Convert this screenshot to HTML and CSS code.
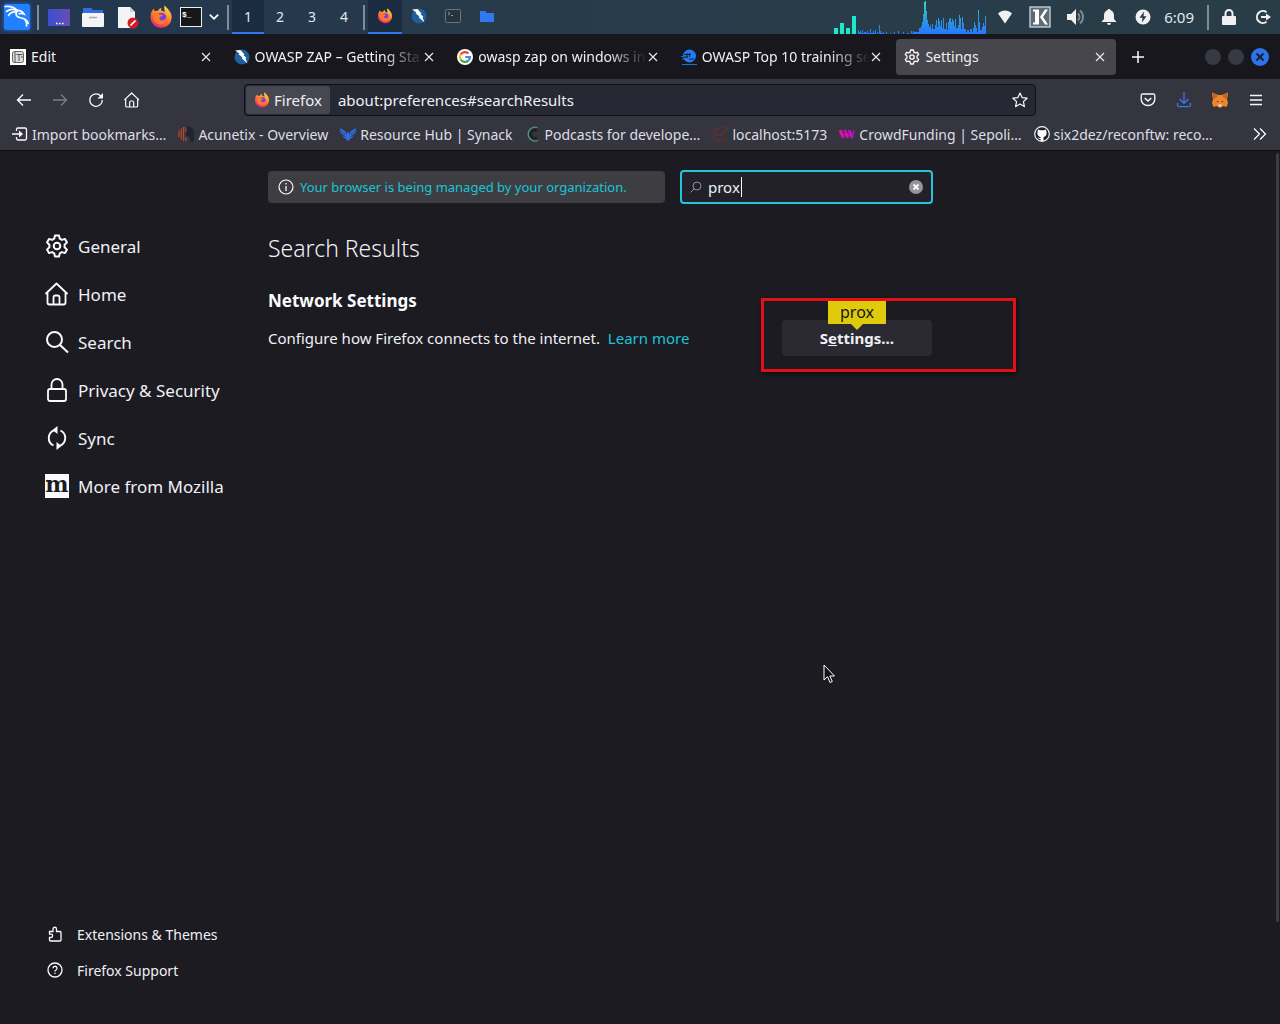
FILE: index.html
```
<!DOCTYPE html>
<html lang="en">
<head>
    <meta charset="UTF-8">
    <meta name="viewport" content="width=device-width, initial-scale=1.0">
    <title>Settings</title>
    <link rel="stylesheet" href="styles.css">
</head>
<body>

    <!-- Shared icons -->
    <svg class="sprite" aria-hidden="true">
        <defs>
            <linearGradient id="fire" x1="0.8" y1="0" x2="0.3" y2="1">
                <stop offset="0" stop-color="#ffe14d"/>
                <stop offset="0.45" stop-color="#ff8a2a"/>
                <stop offset="0.8" stop-color="#ff4055"/>
                <stop offset="1" stop-color="#e5208a"/>
            </linearGradient>
            <linearGradient id="desk" x1="0" y1="0" x2="1" y2="0">
                <stop offset="0" stop-color="#3b4fd0"/>
                <stop offset="1" stop-color="#6b4bb5"/>
            </linearGradient>
            <linearGradient id="net" x1="0" y1="0" x2="0" y2="34" gradientUnits="userSpaceOnUse">
                <stop offset="0" stop-color="#2fe0d0"/>
                <stop offset="0.5" stop-color="#2e9fd8"/>
                <stop offset="1" stop-color="#2777ff"/>
            </linearGradient>
        </defs>
        <symbol id="firefox" viewBox="0 0 24 24">
            <path d="M1.500 12C1.500 8 3 5 5 3.500c0 1.300.3 2 .9 2.700 1-.5 2-.6 3-.4C10 4 11 3.300 12.500 3c-.5 1-.6 1.700-.4 2.500 2 .3 2.900 1.200 3.400 2C15.700 4.500 14.800 2.500 15.500 0.500c1.500 1.500 2.600 2.300 3.800 4C21.500 7 22.700 9.500 22.700 12.500a10.600 10.600 0 0 1-21.200-.5z" fill="url(#fire)"/>
            <circle cx="12.300" cy="12.700" r="5" fill="#7a3fd8"/>
            <path d="M4.500 9.500c2-1.700 4.500-1.500 6 0 1.500.2 2.500.2 3.300.6-.8 1.600-2.300 1.500-3.300 2.400-.3 2.200 1.500 3.500 3.600 3 2-.5 3-2 3-4 1.700 3 .3 7-4 8-4.600.8-8.600-3-8.600-7z" fill="#ff7a2e"/>
        </symbol>
        <symbol id="zap" viewBox="0 0 16 16">
            <circle cx="8" cy="8" r="7.500" fill="#1f5f9c"/>
            <path d="M1 1.500 6.500 1l4 4.500-1 .5 3 3-1 .5 2 5-6-5.500 1-.6-4-3.200 1-.6z" fill="#fff"/>
        </symbol>
        <symbol id="close" viewBox="0 0 10 10">
            <path d="M1 1l8 8M9 1 1 9" stroke="#e6e6ec" stroke-width="1.200" fill="none"/>
        </symbol>
        <symbol id="gear" viewBox="0 0 24 24">
            <path d="M10 1.500h4l.8 3.200 2 1.200 3.200-1 2 3.500-2.400 2.300v2.600l2.400 2.300-2 3.500-3.200-1-2 1.200-.8 3.200h-4l-.8-3.200-2-1.200-3.200 1-2-3.500 2.400-2.300v-2.600L2 8.400l2-3.500 3.200 1 2-1.200z" fill="none" stroke="#fbfbfe" stroke-width="2" stroke-linejoin="round"/>
            <circle cx="12" cy="12" r="3.300" fill="none" stroke="#fbfbfe" stroke-width="2"/>
        </symbol>
        <symbol id="home" viewBox="0 0 24 24">
            <path d="M1 11.500 11.500 1.500 22 11.500M2.500 10.500V20.500a2 2 0 0 0 2 2h14a2 2 0 0 0 2-2V10.500M8.500 22v-6.500a2 2 0 0 1 2-2h2a2 2 0 0 1 2 2V22" fill="none" stroke="#fbfbfe" stroke-width="1.800" stroke-linejoin="round" stroke-linecap="round"/>
        </symbol>
    </svg>

    <!-- Desktop panel -->
    <header class="panel">
        <svg class="kali" viewBox="0 0 26 26"><rect width="26" height="26" rx="2" fill="#2080ff"/><path d="M1 2.500C6 2 10 3 13 6M2.500 7.500C6 5 10 5 13 7M4.500 11.500C6 9 9 7.500 13 8M12 6.500c3-.5 6 .3 8 3.500-2-.8-3.500-.8-5-.3M13 7.500c-2.500 3 0 6 4.500 6.500 3.500.5 5.500 3 5 8M19.500 14.500c2.500 1 4 2.500 4.700 5" fill="none" stroke="#fff" stroke-width="1.600" stroke-linecap="round"/></svg>
        <span class="sep"></span>
        <div class="launchers">
            <svg viewBox="0 0 24 24"><rect x="1" y="4" width="22" height="17" fill="url(#desk)"/><path d="M9 18.500h1.500M12 18.500h1.500M15 18.500h1.500" stroke="#fff" stroke-width="1.500"/></svg>
            <svg viewBox="0 0 24 24"><path d="M2 3h8l2 2h10v4H2z" fill="#2f6fe4"/><rect x="1" y="8" width="22" height="14" rx="1" fill="#f4f4f6"/><path d="M8 12.500h8" stroke="#aaa" stroke-width="1.500"/></svg>
            <svg viewBox="0 0 24 24"><path d="M3 2h12l5 5v16H3z" fill="#f4f4f6"/><path d="M15 2v5h5z" fill="#cfcfd4"/><circle cx="18" cy="18" r="5.500" fill="#cf1e24"/><path d="M15.500 20.500 20.500 15.500" stroke="#fff" stroke-width="1.700"/></svg>
            <svg viewBox="0 0 24 24"><use href="#firefox"/></svg>
            <svg class="terminal" viewBox="0 0 22 24"><rect x="0.500" y="2.500" width="21" height="19" fill="#15171a" stroke="#eee"/><text x="2" y="12" class="prompt">$_</text></svg>
        </div>
        <svg class="chevron" viewBox="0 0 10 10"><path d="M1.500 3 5 6.500 8.500 3" fill="none" stroke="#fff" stroke-width="1.500"/></svg>
        <span class="sep"></span>
        <nav class="workspaces">
            <button class="workspace current">1</button>
            <button class="workspace">2</button>
            <button class="workspace">3</button>
            <button class="workspace">4</button>
        </nav>
        <span class="sep"></span>
        <div class="windows">
            <button class="window current" aria-label="Firefox"><svg viewBox="0 0 24 24"><use href="#firefox"/></svg></button>
            <button class="window" aria-label="ZAP"><svg viewBox="0 0 16 16"><use href="#zap"/></svg></button>
            <button class="window" aria-label="Terminal"><svg viewBox="0 0 16 16"><rect x="0.500" y="1.500" width="15" height="13" rx="1" fill="#26343a" stroke="#69767c"/><path d="M3 4l2 1.500L3 7M6 7.500h2" stroke="#aab" stroke-width="0.800" fill="none"/></svg></button>
            <button class="window" aria-label="Files"><svg viewBox="0 0 16 16"><path d="M1 3h5l2 2h7v9H1z" fill="#2f78ee"/></svg></button>
        </div>
        <svg class="graph" viewBox="0 0 152 34">
            <path d="M0 28h4v6H0zM6 23h4v11H6zM12 28h4v6h-4zM18 16h4v18h-4z" fill="#1ee8cb"/>
            <path d="M24 34V30h1v2h1v-1h1v2h1v-3h1v3h1v-1h2v1h1v-2h1v2h2v-4h1v4h2v-2h1v2h1v-3h1v4h1v-2h1v2h1v-9h1v6h1v2h2v-1h1v2h2v-2h1v2h3v-1h1v1h3v-2h1v2h3v-3h1v3h4v-2h1v2h3v-1h2v1h2v-3h1v2h1v-2h1v1h5v-4h2v-2h1v-4h1v-8h1V2h1V1h1v10h1v9h1v4h1v3h1v-2h1v4h1v-5h1v5h2v-4h1v-5h1v7h1v-9h1v3h1v5h1v-6h1v8h1v-10h1v11h2v-6h1v7h1v-8h1v-3h1v-1h1v4h1v-3h1v2h1v5h1v-7h1v9h2v-3h1V15h1v3h1v11h1v-12h1v6h1v6h2v3h1v-2h2v2h1v-3h2v3h1v-4h1v-6h1v3h1v3h1v4h1V10h1v12h1v8h2v-3h1v-4h1v3h1v-10h1v8h1v7h1v-5h1v8z" fill="url(#net)"/>
        </svg>
        <div class="tray">
            <svg viewBox="0 0 20 20"><path d="M3 6.500C7 2.500 13 2.500 17 6.500L10 16.500z" fill="#f1f1f1"/></svg>
            <svg class="keepass" viewBox="0 0 22 22"><rect x="1" y="1" width="20" height="20" fill="#5c6c76" stroke="#cfd6da" stroke-width="1.300"/><path d="M4 3.500h6v15H4v-2h2V5.500H4zM12 9.500l4-6h3l-5 7.500 5 7.500h-3l-5-7.500z" fill="#fff"/></svg>
            <svg viewBox="0 0 20 20"><path d="M2 7h4l5-5v16l-5-5H2z" fill="#f1f1f1"/><path d="M13 6.500a5 5 0 0 1 0 7M15 3.500a8.500 8.500 0 0 1 0 13" stroke="#7c8b95" stroke-width="2" fill="none"/></svg>
            <svg viewBox="0 0 20 20"><path d="M10 2c1 0 1.500.6 1.600 1.300C14 4 15 6 15 8.500V12l2.500 3h-15L5 12V8.500C5 6 6 4 8.400 3.300 8.500 2.600 9 2 10 2zM8 16h4a2 2 0 0 1-4 0z" fill="#f1f1f1"/></svg>
            <svg viewBox="0 0 20 20"><circle cx="10" cy="10" r="7.500" fill="#f1f1f1"/><path d="M11 4.500 6.500 10.800h3L9 15.500l4.500-6.300h-3z" fill="#273c4a"/></svg>
        </div>
        <time class="clock">6:09</time>
        <span class="sep"></span>
        <div class="session">
            <svg viewBox="0 0 20 20"><rect x="3" y="9" width="14" height="9" rx="1" fill="#f1f1f1"/><path d="M6.500 9V6.500a3.500 3.500 0 0 1 7 0V9" fill="none" stroke="#f1f1f1" stroke-width="2"/></svg>
            <svg viewBox="0 0 20 20"><path d="M13.500 5.200A6 6 0 1 0 13.500 14.800" fill="none" stroke="#f1f1f1" stroke-width="2"/><path d="M8 10h7" stroke="#f1f1f1" stroke-width="2"/><path d="M13 6.500 18 10l-5 3.500z" fill="#f1f1f1"/></svg>
        </div>
    </header>

    <!-- Tab strip -->
    <div class="tabstrip">
        <div class="tabs">
            <div class="tab">
                <svg class="favicon" viewBox="0 0 16 16"><rect width="16" height="16" fill="#fff"/><rect x="2.500" y="2.500" width="11" height="11" rx="2" fill="#ddd" stroke="#666"/><path d="M5 2.500v11M6.500 5.500h6M9 5.500V12M11 8h2" stroke="#555" fill="none"/></svg>
                <span class="tab-title">Edit</span>
                <button class="tab-close" aria-label="Close tab"><svg><use href="#close"/></svg></button>
            </div>
            <div class="tab">
                <svg class="favicon" viewBox="0 0 16 16"><use href="#zap"/></svg>
                <span class="tab-title fade">OWASP ZAP – Getting Sta</span>
                <button class="tab-close" aria-label="Close tab"><svg><use href="#close"/></svg></button>
            </div>
            <div class="tab">
                <svg class="favicon" viewBox="0 0 16 16"><circle cx="8" cy="8" r="8" fill="#fff"/><g fill="none" stroke-width="2.200"><path d="M11.500 4.500A5 5 0 0 0 3.700 5.500" stroke="#ea4335"/><path d="M3.700 5.500a5 5 0 0 0 0 5" stroke="#fbbc05"/><path d="M3.700 10.500a5 5 0 0 0 7.600 1.200" stroke="#34a853"/><path d="M11.300 11.700A5 5 0 0 0 13 8H8.300" stroke="#4285f4"/></g></svg>
                <span class="tab-title fade">owasp zap on windows in</span>
                <button class="tab-close" aria-label="Close tab"><svg><use href="#close"/></svg></button>
            </div>
            <div class="tab">
                <svg class="favicon" viewBox="0 0 16 16"><circle cx="8.500" cy="7" r="6.500" fill="#1f7cf5"/><path d="M3 5.500h7M2 8h5M6 4v5M8.500 4v4M8 10h5" stroke="#123" stroke-width="1"/><path d="M0 7.500h3M1 10h3M1 15.500h15" stroke="#2a6bc4"/></svg>
                <span class="tab-title fade">OWASP Top 10 training se</span>
                <button class="tab-close" aria-label="Close tab"><svg><use href="#close"/></svg></button>
            </div>
            <div class="tab selected">
                <svg class="favicon" viewBox="0 0 24 24"><use href="#gear"/></svg>
                <span class="tab-title">Settings</span>
                <button class="tab-close" aria-label="Close tab"><svg><use href="#close"/></svg></button>
            </div>
        </div>
        <button class="new-tab" aria-label="New tab"><svg viewBox="0 0 14 14"><path d="M7 1v12M1 7h12" stroke="#fbfbfe" stroke-width="1.500"/></svg></button>
        <div class="controls">
            <button class="control" aria-label="Minimize"></button>
            <button class="control" aria-label="Maximize"></button>
            <button class="control quit" aria-label="Close"><svg viewBox="0 0 10 10"><path d="M1.500 1.500l7 7M8.500 1.500l-7 7" stroke="#15203a" stroke-width="2"/></svg></button>
        </div>
    </div>

    <!-- Navigation toolbar -->
    <div class="toolbar">
        <div class="tools">
            <button class="tool" aria-label="Back"><svg viewBox="0 0 16 16"><path d="M15 8H1.500M7 2.500 1.500 8 7 13.500" fill="none" stroke="#fbfbfe" stroke-width="1.300"/></svg></button>
            <button class="tool" aria-label="Forward"><svg viewBox="0 0 16 16"><path d="M1 8h13.500M9 2.500 14.500 8 9 13.500" fill="none" stroke="#7b7c84" stroke-width="1.300"/></svg></button>
            <button class="tool" aria-label="Reload"><svg viewBox="0 0 16 16"><path d="M12.800 4A6.300 6.300 0 1 0 14.300 8" fill="none" stroke="#fbfbfe" stroke-width="1.300"/><path d="M15 1v5.500H9.500z" fill="#fbfbfe"/></svg></button>
            <button class="tool" aria-label="Home"><svg viewBox="0 0 24 24"><use href="#home"/></svg></button>
        </div>
        <div class="urlbar">
            <span class="identity"><svg viewBox="0 0 24 24"><use href="#firefox"/></svg>Firefox</span>
            <input class="url" type="text" aria-label="Address" value="about:preferences#searchResults">
            <button class="star" aria-label="Bookmark"><svg viewBox="0 0 16 16"><path d="M8 1l2.100 4.600 5 .6-3.700 3.400 1 5L8 12.100l-4.400 2.500 1-5L.9 6.200l5-.6z" fill="none" stroke="#fbfbfe" stroke-width="1.200" stroke-linejoin="round"/></svg></button>
        </div>
        <div class="tools">
            <button class="tool" aria-label="Pocket"><svg viewBox="0 0 16 16"><path d="M2.500 2h11a1.300 1.300 0 0 1 1.300 1.300v4a6.800 6.200 0 0 1-13.600 0v-4A1.300 1.300 0 0 1 2.500 2z" fill="none" stroke="#fbfbfe" stroke-width="1.300"/><path d="M4.700 6 8 9l3.300-3" fill="none" stroke="#fbfbfe" stroke-width="1.500"/></svg></button>
            <button class="tool" aria-label="Downloads"><svg viewBox="0 0 16 16"><path d="M8 0v11M3.500 7 8 11.300 12.500 7M1.500 11v2a1.700 1.700 0 0 0 1.700 1.700h9.600a1.700 1.700 0 0 0 1.700-1.700v-2" fill="none" stroke="#3b78e8" stroke-width="1.300"/></svg></button>
            <button class="tool" aria-label="MetaMask"><svg viewBox="0 0 16 16"><path d="M0 .5 6 3h4L16 .5 15 7l1 4-1.500 4-3.500-1-1.500 1.500h-3L5 14l-3.500 1L0 11l1-4z" fill="#f0852b"/><path d="M0 .5 6 3 4.500 6 1 7zM16 .5 10 3l1.500 3L15 7z" fill="#c9681f"/><path d="M6 12.500h4l-1 2H7z" fill="#e8ded4"/><path d="M4.500 9h2L6 10.200zM11.500 9h-2l.5 1.200z" fill="#2d2a35"/></svg></button>
            <button class="tool" aria-label="Menu"><svg viewBox="0 0 16 16"><path d="M2 3.500h12M2 8h12M2 12.500h12" stroke="#fbfbfe" stroke-width="1.300"/></svg></button>
        </div>
    </div>

    <!-- Bookmarks toolbar -->
    <nav class="bookmarks">
        <a class="bookmark" href="#"><svg viewBox="0 0 16 16"><path d="M4.500 5V3.500A1.500 1.500 0 0 1 6 2h7a1.500 1.500 0 0 1 1.500 1.500v9A1.500 1.500 0 0 1 13 14H6a1.500 1.500 0 0 1-1.500-1.500V11M0 8h10" fill="none" stroke="#fbfbfe" stroke-width="1.300"/><path d="M7 4.500 11 8l-4 3.500z" fill="#fbfbfe"/></svg>Import bookmarks…</a>
        <a class="bookmark" href="#"><svg viewBox="0 0 16 16"><path d="M8 0c6 0 8 4 8 8v7l-4 1c1-4-1-6-4-6z" fill="#202430"/><path d="M1 5v6M3.300 2.500v11M5.600 1v14M7.800 1v5M7.800 11v4" stroke="#b9492f" stroke-width="1.200"/></svg>Acunetix - Overview</a>
        <a class="bookmark" href="#"><svg viewBox="0 0 16 16"><path d="M0 2l5 3 1.500 4L7 5.500 8 7l1-1.500L9.500 9 11 5l5-3c0 4-1 6-3 7 0 3-2 3-3 4l-2 2-2-2c-1-1-3-1-3-4C1 8 0 6 0 2z" fill="#2f6fe8"/><path d="M1 5 5 8.500M15 5 11 8.500M3 9l3 2M13 9l-3 2" stroke="#33353f" stroke-width="0.700"/></svg>Resource Hub | Synack</a>
        <a class="bookmark" href="#"><svg viewBox="0 0 16 16"><path d="M12.500 1.500A7 7 0 1 0 13 14.500" fill="none" stroke="#4f9c82" stroke-width="1.200"/><path d="M12 5a4 4 0 1 0 0 6.500" fill="none" stroke="#1b2326" stroke-width="2.500"/></svg>Podcasts for develope…</a>
        <a class="bookmark" href="#"><svg viewBox="0 0 16 16"><path d="M8 2C3 2 1.500 5 1.500 9s3 6 6 6 5-1 6-3M3 9h8M11 1l4 1-2 4-3 1" fill="none" stroke="#6d2a32" stroke-width="1.500"/></svg>localhost:5173</a>
        <a class="bookmark" href="#"><svg viewBox="0 0 16 16"><path d="M1 4l3.500 8M5.500 4 9 12M10 4l3.500 8" stroke="#e012a4" stroke-width="3"/><path d="M4.500 12 6.500 4M9 12l2-8M13.500 12 15 4" stroke="#9a14c8" stroke-width="1.500"/></svg>CrowdFunding | Sepoli…</a>
        <a class="bookmark" href="#"><svg viewBox="0 0 16 16"><circle cx="8" cy="8" r="7.300" fill="#22232b" stroke="#f4f4f8" stroke-width="1.200"/><path d="M4 3.500l2 .8h4l2-.8.5 2.500c.5 3-1 4.500-3 5v4h-3v-2c-1.500.3-2-.5-3-1.500 1 0 1.500 1 3 .5V11c-2-.5-3.500-2-3-5z" fill="#fff"/></svg>six2dez/reconftw: reco…</a>
        <button class="more" aria-label="More bookmarks"><svg viewBox="0 0 16 16"><path d="M2 2.500 7.500 8 2 13.500M8 2.500 13.500 8 8 13.500" fill="none" stroke="#fbfbfe" stroke-width="1.300"/></svg></button>
    </nav>

    <!-- Preferences page -->
    <div class="page">
        <aside class="sidebar">
            <nav class="categories">
                <a class="category" href="#"><svg viewBox="0 0 24 24"><use href="#gear"/></svg>General</a>
                <a class="category" href="#"><svg viewBox="0 0 24 24"><use href="#home"/></svg>Home</a>
                <a class="category" href="#"><svg viewBox="0 0 24 24"><circle cx="9.500" cy="9.500" r="7.500" fill="none" stroke="#fbfbfe" stroke-width="2"/><path d="M15 15l8 7.500" stroke="#fbfbfe" stroke-width="2"/></svg>Search</a>
                <a class="category" href="#"><svg viewBox="0 0 24 24"><rect x="3" y="11" width="18" height="12" rx="2" fill="none" stroke="#fbfbfe" stroke-width="1.800"/><path d="M6.500 11V6.500a5.500 5.500 0 0 1 11 0V11" fill="none" stroke="#fbfbfe" stroke-width="1.800"/></svg>Privacy &amp; Security</a>
                <a class="category" href="#"><svg viewBox="0 0 24 24"><path d="M8.500 19.500A8.300 8.300 0 0 1 9 4.300M15.500 4.500A8.300 8.300 0 0 1 15 19.700" fill="none" stroke="#fbfbfe" stroke-width="1.900"/><path d="M12.500 0v8L7.500 4zM11.500 24v-8l5 4z" fill="#fbfbfe"/></svg>Sync</a>
                <a class="category" href="#"><span class="moz">m</span>More from Mozilla</a>
            </nav>
            <nav class="footer-links">
                <a class="footer-link" href="#"><svg viewBox="0 0 16 16"><path d="M2.500 5.500h3.500V3a1.700 1.700 0 0 1 3.500 0v2.500H13a1 1 0 0 1 1 1V14a1 1 0 0 1-1 1H3.500a1 1 0 0 1-1-1v-2.500H4a1.600 1.600 0 0 0 0-3.300H2.500z" fill="none" stroke="#fbfbfe" stroke-width="1.300"/></svg>Extensions &amp; Themes</a>
                <a class="footer-link" href="#"><svg viewBox="0 0 16 16"><circle cx="8" cy="8" r="7" fill="none" stroke="#fbfbfe" stroke-width="1.300"/><path d="M6 6.300a2 2 0 1 1 3 1.700c-.8.400-1 .8-1 1.500M8 10.700v1.400" fill="none" stroke="#fbfbfe" stroke-width="1.300"/></svg>Firefox Support</a>
            </nav>
        </aside>
        <main class="content">
            <div class="top-row">
                <a class="notice" href="#"><svg viewBox="0 0 16 16"><circle cx="8" cy="8" r="7" fill="none" stroke="#fbfbfe" stroke-width="1.200"/><path d="M8 7v5M8 4v1.500" stroke="#fbfbfe" stroke-width="1.300"/></svg>Your browser is being managed by your organization.</a>
                <div class="search">
                    <svg class="lens" viewBox="0 0 12 12"><circle cx="7" cy="5" r="4" fill="none" stroke="#8f8f9a"/><path d="M4 8 .5 11.500" stroke="#8f8f9a"/></svg>
                    <input class="query" type="text" aria-label="Find in Settings" value="prox">
                    <span class="caret"></span>
                    <button class="clear" aria-label="Clear"><svg viewBox="0 0 14 14"><circle cx="7" cy="7" r="7" fill="#95959b"/><path d="M4.500 4.500l5 5M9.500 4.500l-5 5" stroke="#fff" stroke-width="1.800"/></svg></button>
                </div>
            </div>
            <h1 class="title">Search Results</h1>
            <section class="network">
                <h2 class="subtitle">Network Settings</h2>
                <div class="network-row">
                    <p class="text">Configure how Firefox connects to the internet. <a class="learn" href="#">Learn more</a></p>
                    <div class="button-box">
                        <button class="button">S<u>e</u>ttings…</button>
                        <span class="tooltip">prox</span>
                        <span class="marker"></span>
                    </div>
                </div>
            </section>
        </main>
        <span class="scrollbar"></span>
        <svg class="cursor" viewBox="0 0 12 20"><path d="M1 1v15l3.500-3.300L7 18.500l2.300-1-2.500-5.500h4.700z" fill="#111" stroke="#fff"/></svg>
    </div>

</body>
</html>
```
FILE: styles.css
```
* {
    box-sizing: border-box;
}
body {
    margin: 0;
    min-height: 100vh;
    display: flex;
    flex-direction: column;
    font-family: "Noto Sans", "Open Sans", sans-serif;
    font-size: 14px;
    color: #f0f0f4;
    background-color: #1c1b22;
}
button {
    padding: 0;
    border: none;
    background: none;
    color: inherit;
    font: inherit;
}
a {
    color: inherit;
    text-decoration: none;
}
svg {
    display: block;
    flex: none;
}
.sprite {
    position: absolute;
    width: 0;
    height: 0;
}

/* Desktop panel */
.panel {
    display: flex;
    align-items: center;
    height: 34px;
    padding: 0 7px 0 4px;
    background: linear-gradient(to right, #22364f, #283b4b 40%, #293d48);
    color: #e4e8ea;
}
.kali {
    width: 26px;
    height: 26px;
    margin-right: 7px;
    box-shadow: 0 0 4px #1f6fe0;
}
.sep {
    width: 2px;
    height: 25px;
    background-color: #7f8d98;
}
.launchers {
    display: flex;
    gap: 10px;
    margin-left: 8px;
}
.launchers svg {
    width: 24px;
    height: 24px;
}
.launchers .terminal {
    width: 22px;
    margin-left: -3px;
}
.prompt {
    font: bold 8px "Liberation Mono", monospace;
    fill: #fff;
}
.chevron {
    width: 12px;
    height: 12px;
    margin: 0 7px 0 6px;
}
.workspaces, .windows {
    display: flex;
    height: 34px;
}
.workspaces {
    margin: 0 3px;
}
.workspace {
    width: 32px;
    border-bottom: 2px solid transparent;
}
.windows {
    margin-left: 3px;
}
.window {
    display: flex;
    align-items: center;
    justify-content: center;
    width: 34px;
    border-bottom: 2px solid transparent;
}
.window svg {
    width: 16px;
    height: 16px;
}
.current {
    background-color: #1b2c40;
    border-bottom-color: #2f78ee;
}
.graph {
    width: 152px;
    height: 34px;
    margin-left: auto;
}
.tray {
    display: flex;
    align-items: center;
    gap: 14px;
    margin-left: 9px;
}
.tray svg, .session svg {
    width: 20px;
    height: 20px;
}
.tray .keepass {
    width: 22px;
    height: 22px;
}
.clock {
    margin: 0 13px 0 11px;
    font-size: 15px;
}
.session {
    display: flex;
    gap: 14px;
    margin-left: 10px;
}

/* Tabs */
.tabstrip {
    display: flex;
    align-items: center;
    height: 45px;
    padding: 0 11px 0 2px;
    background-color: #17171d;
}
.tabs {
    display: flex;
    flex: 1;
    gap: 4px;
    max-width: 1114px;
}
.tab {
    display: flex;
    flex: 1;
    align-items: center;
    min-width: 0;
    height: 36px;
    padding: 0 10px 0 8px;
    border-radius: 4px;
}
.selected {
    background-color: #46464c;
}
.favicon {
    width: 16px;
    height: 16px;
    margin-right: 5px;
}
.tab-title {
    flex: 1;
    overflow: hidden;
    white-space: nowrap;
}
.fade {
    -webkit-mask-image: linear-gradient(to left, transparent, #000 40px);
    mask-image: linear-gradient(to left, transparent, #000 40px);
}
.tab-close svg {
    width: 10px;
    height: 10px;
    margin: 0 1px;
}
.new-tab {
    padding: 15px;
}
.new-tab svg {
    width: 14px;
    height: 14px;
}
.controls {
    display: flex;
    align-items: center;
    gap: 7px;
    margin-left: auto;
}
.control {
    width: 16px;
    height: 16px;
    border-radius: 50%;
    background-color: #373942;
}
.quit {
    display: flex;
    align-items: center;
    justify-content: center;
    width: 18px;
    height: 18px;
    background-color: #2f73ea;
}
.quit svg {
    width: 10px;
    height: 10px;
}

/* Toolbars */
.toolbar {
    display: flex;
    align-items: center;
    justify-content: space-between;
    height: 41px;
    padding: 0 6px;
    background-color: #34353e;
}
.tools {
    display: flex;
}
.tool {
    display: flex;
    align-items: center;
    justify-content: center;
    width: 36px;
    height: 36px;
}
.tool svg, .star svg {
    width: 16px;
    height: 16px;
}
.urlbar {
    display: flex;
    align-items: center;
    flex: 0 1 792px;
    height: 32px;
    padding: 0 7px 0 1px;
    border: 1px solid #0f1015;
    border-radius: 4px;
    background-color: #262833;
    font-size: 15px;
}
.identity {
    display: flex;
    align-items: center;
    gap: 4px;
    height: 28px;
    padding: 0 8px;
    border-radius: 3px;
    background-color: #464750;
}
.identity svg {
    width: 16px;
    height: 16px;
}
.url {
    flex: 1;
    min-width: 0;
    padding: 0 8px;
    border: none;
    outline: none;
    background: none;
    color: inherit;
    font: inherit;
}
.bookmarks {
    display: flex;
    align-items: center;
    gap: 12px;
    height: 31px;
    padding: 0 12px 2px;
    border-bottom: 1px solid #0f1015;
    background-color: #34353e;
    color: #dedee4;
}
.bookmark {
    display: flex;
    align-items: center;
    gap: 4px;
    white-space: nowrap;
}
.bookmark svg, .more svg {
    width: 16px;
    height: 16px;
}
.more {
    margin-left: auto;
}

/* Page */
.page {
    position: relative;
    display: flex;
    flex: 1;
}
.sidebar {
    display: flex;
    flex-direction: column;
    justify-content: space-between;
    width: 268px;
    padding: 71px 0 36px 45px;
}
.category {
    display: flex;
    align-items: center;
    gap: 9px;
    height: 48px;
    font-size: 17px;
}
.category svg {
    width: 24px;
    height: 24px;
}
.moz {
    width: 24px;
    height: 24px;
    background-color: #fbfbfe;
    color: #1c1b22;
    font: bold 22px/20px "DejaVu Serif", serif;
    text-align: center;
}
.footer-link {
    display: flex;
    align-items: center;
    gap: 14px;
    height: 36px;
    padding-left: 2px;
}
.footer-link svg {
    width: 16px;
    height: 16px;
}
.content {
    flex: 0 1 665px;
    padding-top: 19px;
}
.top-row {
    display: flex;
    align-items: center;
    gap: 15px;
}
.notice {
    display: flex;
    flex: 1;
    align-items: center;
    gap: 6px;
    height: 32px;
    padding: 0 10px;
    border-radius: 4px;
    background-color: #3d3d42;
    color: #1cc4d6;
    font-size: 13px;
}
.notice svg {
    width: 16px;
    height: 16px;
}
.search {
    position: relative;
    display: flex;
    align-items: center;
    width: 253px;
    height: 34px;
    padding: 0 8px;
    border: 2px solid #25c4dc;
    border-radius: 4px;
    background-color: #22212a;
}
.lens {
    width: 12px;
    height: 12px;
}
.query {
    flex: 1;
    min-width: 0;
    padding: 0 6px;
    border: none;
    outline: none;
    background: none;
    color: inherit;
    font: inherit;
    font-size: 15px;
}
.caret {
    position: absolute;
    top: 5px;
    left: 59px;
    width: 1px;
    height: 20px;
    background-color: #fbfbfe;
}
.clear svg {
    width: 14px;
    height: 14px;
}
.title {
    margin: 28px 0 0;
    font-size: 23px;
    font-weight: 300;
    line-height: 32px;
}
.subtitle {
    margin: 25px 0 0;
    color: #fbfbfe;
    font-size: 17px;
    font-weight: 700;
    line-height: 24px;
}
.network-row {
    display: flex;
    align-items: center;
    justify-content: space-between;
    margin-top: 7px;
    padding-right: 1px;
}
.text {
    margin: 0;
    font-size: 15px;
}
.learn {
    margin-left: 4px;
    color: #1cc4d6;
}
.button-box {
    position: relative;
}
.button {
    width: 150px;
    height: 36px;
    border-radius: 4px;
    background-color: #2b2a33;
    font-size: 15px;
    font-weight: 700;
}
.tooltip {
    position: absolute;
    top: -19px;
    left: 46px;
    width: 58px;
    height: 23px;
    background-color: #dfca0c;
    color: #15141a;
    font-size: 16px;
    line-height: 23px;
    text-align: center;
}
.tooltip::after {
    content: "";
    position: absolute;
    top: 23px;
    left: 23px;
    border: 6px solid transparent;
    border-top-color: #dfca0c;
    border-bottom: none;
}
.marker {
    position: absolute;
    top: -22px;
    left: -21px;
    width: 255px;
    height: 74px;
    border: 3px solid #e01015;
    box-shadow: 1px 2px 4px #0c0b10;
}
.scrollbar {
    position: absolute;
    top: 2px;
    right: 1px;
    bottom: 102px;
    width: 3px;
    border-radius: 2px;
    background-color: #3c3c42;
}
.cursor {
    position: absolute;
    top: 513px;
    left: 823px;
    width: 12px;
    height: 20px;
}
```
